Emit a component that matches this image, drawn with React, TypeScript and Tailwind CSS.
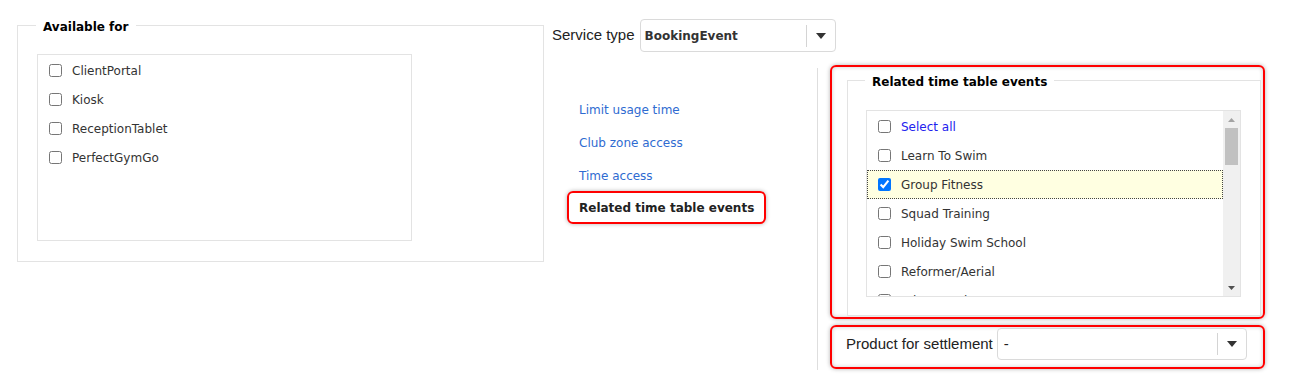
import React from 'react';

const channels = ['ClientPortal', 'Kiosk', 'ReceptionTablet', 'PerfectGymGo'];

const events = [
  { label: 'Learn To Swim', checked: false },
  { label: 'Group Fitness', checked: true },
  { label: 'Squad Training', checked: false },
  { label: 'Holiday Swim School', checked: false },
  { label: 'Reformer/Aerial', checked: false },
  { label: 'Private Swim Lessons', checked: false },
];

const links = ['Limit usage time', 'Club zone access', 'Time access'];

const Check: React.FC<{ checked?: boolean }> = ({ checked }) => (
  <input
    type="checkbox"
    defaultChecked={checked}
    className="m-0 w-[13px] h-[13px] shrink-0"
  />
);

const Arrow: React.FC = () => (
  <svg width="10" height="6" viewBox="0 0 10 6">
    <polygon points="0,0 10,0 5,6" fill="#333" />
  </svg>
);

const Select: React.FC<{ value: string; bold?: boolean; className: string }> = ({ value, bold, className }) => (
  <div className={`flex items-center border border-[#dadada] rounded-[4px] bg-white ${className}`}>
    {bold ? (
      <span className="flex-1 pl-[4px] font-['DejaVu_Sans',sans-serif] text-[12px] font-bold text-[#333]">{value}</span>
    ) : (
      <span className="flex-1 pl-[6px] font-['Liberation_Sans',sans-serif] text-[15px] text-[#222]">{value}</span>
    )}
    <div className="w-px h-[22px] bg-[#d4d4d4]" />
    <div className="w-[28px] flex items-center justify-center">
      <Arrow />
    </div>
  </div>
);

export default function App() {
  return (
    <div className="w-[1293px] h-[381px] bg-white flex items-start overflow-hidden font-['DejaVu_Sans',sans-serif] text-[12px] text-[#333]">
      {/* Available for */}
      <fieldset className="ml-[17px] mt-[15px] w-[527px] border border-[#e3e3e3] px-[18px] pb-[20px]">
        <legend className="px-[7px] pt-[4px] leading-[16px] font-bold text-black">Available for</legend>
        <div className="ml-px mt-[19px] w-[375px] h-[187px] pt-px border border-[#e3e3e3]">
          {channels.map((c) => (
            <div key={c} className="h-[29px] flex items-center pl-[11px]">
              <Check />
              <span className="ml-[10px]">{c}</span>
            </div>
          ))}
        </div>
      </fieldset>

      <div className="ml-[8px] flex flex-col">
        <div className="mt-[19px] flex items-center">
          <span className="font-['Liberation_Sans',sans-serif] text-[15px] text-[#222]">Service type</span>
          <Select value="BookingEvent" bold className="ml-[5px] w-[196px] h-[33px]" />
        </div>

        <div className="mt-[13px] flex items-start">
          {/* section links */}
          <div className="w-[265px] pl-[15px] pt-[28px] flex flex-col items-start">
            {links.map((l) => (
              <a key={l} className="h-[33px] flex items-center px-[10px] border-2 border-transparent text-[#2f6bd1]">
                {l}
              </a>
            ))}
            <a className="-mt-px h-[33px] flex items-center px-[10px] border-2 border-[#f00] rounded-[6px] font-bold text-[#222] shadow-[0_0_4px_rgba(0,0,0,0.3)]">
              Related time table events
            </a>
          </div>

          <div className="w-px h-[302px] mt-[3px] bg-[#dedede]" />

          <div className="ml-[12px] w-[435px] flex flex-col">
            <div className="border-2 border-[#f00] rounded-[6px] pt-[3px] pl-[15px] pr-[2px] pb-[1px] shadow-[0_0_4px_rgba(0,0,0,0.3),inset_0_0_4px_rgba(0,0,0,0.2)]">
              <fieldset className="border border-[#e3e3e3] bg-white px-[18px] pb-[18px]">
                <legend className="-ml-px px-[7px] pt-[4px] leading-[16px] font-bold text-black">Related time table events</legend>
                <div className="mt-[20px] w-[375px] h-[187px] border border-[#e3e3e3] flex">
                  <div className="flex-1 overflow-hidden pt-px">
                    <div className="h-[29px] flex items-center pl-[11px]">
                      <Check />
                      <span className="ml-[10px] text-[#2222ee]">Select all</span>
                    </div>
                    {events.map((e) =>
                      e.checked ? (
                        <div
                          key={e.label}
                          className="h-[29px] flex items-center pl-[10px] bg-[#ffffe1] border border-dotted border-[#444]"
                        >
                          <Check checked />
                          <span className="ml-[10px]">{e.label}</span>
                        </div>
                      ) : (
                        <div key={e.label} className="h-[29px] flex items-center pl-[11px]">
                          <Check />
                          <span className="ml-[10px]">{e.label}</span>
                        </div>
                      )
                    )}
                  </div>
                  {/* scrollbar */}
                  <div className="w-[17px] bg-[#f0f0f0] flex flex-col items-center">
                    <div className="h-[17px] flex items-center justify-center">
                      <svg width="7" height="4" viewBox="0 0 7 4">
                        <polygon points="0,4 3.5,0 7,4" fill="#a3a3a3" />
                      </svg>
                    </div>
                    <div className="w-[13px] h-[37px] bg-[#c1c1c1]" />
                    <div className="flex-1" />
                    <div className="h-[17px] flex items-center justify-center">
                      <svg width="7" height="4" viewBox="0 0 7 4">
                        <polygon points="0,0 7,0 3.5,4" fill="#505050" />
                      </svg>
                    </div>
                  </div>
                </div>
              </fieldset>
            </div>

            <div className="mt-[6px] h-[44px] border-2 border-[#f00] rounded-[6px] flex items-start pt-px pl-[14px] shadow-[0_0_4px_rgba(0,0,0,0.3),inset_0_0_4px_rgba(0,0,0,0.2)]">
              <span className="h-[32px] flex items-center font-['Liberation_Sans',sans-serif] text-[15px] text-[#222]">
                Product for settlement
              </span>
              <Select value="-" className="ml-[4px] w-[250px] h-[32px]" />
            </div>
          </div>
        </div>
      </div>
    </div>
  );
}
